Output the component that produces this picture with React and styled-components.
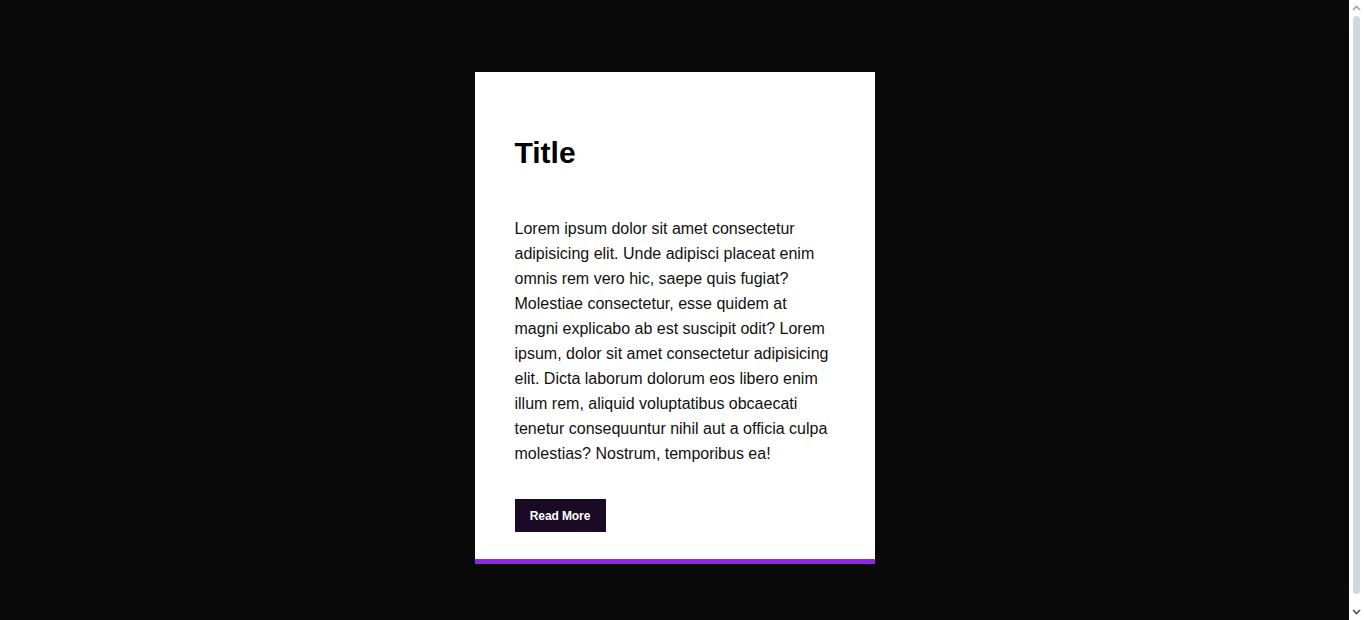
import React from "react";
import styled, { createGlobalStyle } from "styled-components";

const GlobalStyle = createGlobalStyle`
  html {
    background: #0a0a0a;
  }

  body {
    margin: 8px 23px 8px 8px;
    height: 100vh;
    display: flex;
    align-items: center;
    justify-content: center;
    font-family: "Liberation Sans", Arial, sans-serif;
  }

  #root {
    display: flex;
    justify-content: center;
  }
`;

// the page's scrollbar, drawn because the headless browser hides the real one
const Scrollbar = styled.div`
  position: fixed;
  top: 0;
  right: 0;
  bottom: 0;
  width: 15px;
  background: #ffffff;
  display: flex;
  flex-direction: column;
  align-items: center;
`;

const Arrow = styled.div`
  height: 16px;
  width: 15px;
  display: flex;
  align-items: center;
  justify-content: center;
`;

const Thumb = styled.div`
  flex: 1;
  width: 7px;
  margin: 0 0 10px;
  border-radius: 4px;
  background: #cfd8e0;
`;

const Card = styled.div`
  width: 400px;
  box-sizing: border-box;
  background: #ffffff;
  padding: 40px 40px 27px;
  border-bottom: 5px solid #8a2be2;
`;

const Title = styled.h1`
  font-size: 30px;
  font-weight: bold;
  color: #000000;
  margin: 24px 0 45.5px;
`;

const Text = styled.p`
  font-size: 16px;
  line-height: 25px;
  color: #111111;
  margin: 0 0 33px;
`;

const Button = styled.button`
  display: inline-flex;
  align-items: center;
  box-sizing: border-box;
  width: 91px;
  height: 33px;
  padding: 2px 0 0;
  justify-content: center;
  border: none;
  background: #1a0a26;
  color: #ffffff;
  font-family: "Liberation Sans", Arial, sans-serif;
  font-size: 12px;
  font-weight: bold;
  letter-spacing: -0.1px;
  cursor: pointer;
`;

export default function App() {
  return (
    <>
      <GlobalStyle />
      <Card>
        <Title>Title</Title>
        <Text>
          Lorem ipsum dolor sit amet consectetur adipisicing elit. Unde
          adipisci placeat enim omnis rem vero hic, saepe quis fugiat?
          Molestiae consectetur, esse quidem at magni explicabo ab est suscipit
          odit? Lorem ipsum, dolor sit amet consectetur adipisicing elit. Dicta
          laborum dolorum eos libero enim illum rem, aliquid voluptatibus
          obcaecati tenetur consequuntur nihil aut a officia culpa molestias?
          Nostrum, temporibus ea!
        </Text>
        <Button>Read More</Button>
      </Card>
      <Scrollbar>
        <Arrow>
          <svg width="9" height="6" viewBox="0 0 9 6">
            <path d="M1 5 L4.5 1.5 L8 5" fill="none" stroke="#a3a3a3" strokeWidth="1.6" />
          </svg>
        </Arrow>
        <Thumb />
        <Arrow>
          <svg width="9" height="6" viewBox="0 0 9 6">
            <path d="M1 1 L4.5 4.5 L8 1" fill="none" stroke="#505050" strokeWidth="1.6" />
          </svg>
        </Arrow>
      </Scrollbar>
    </>
  );
}
